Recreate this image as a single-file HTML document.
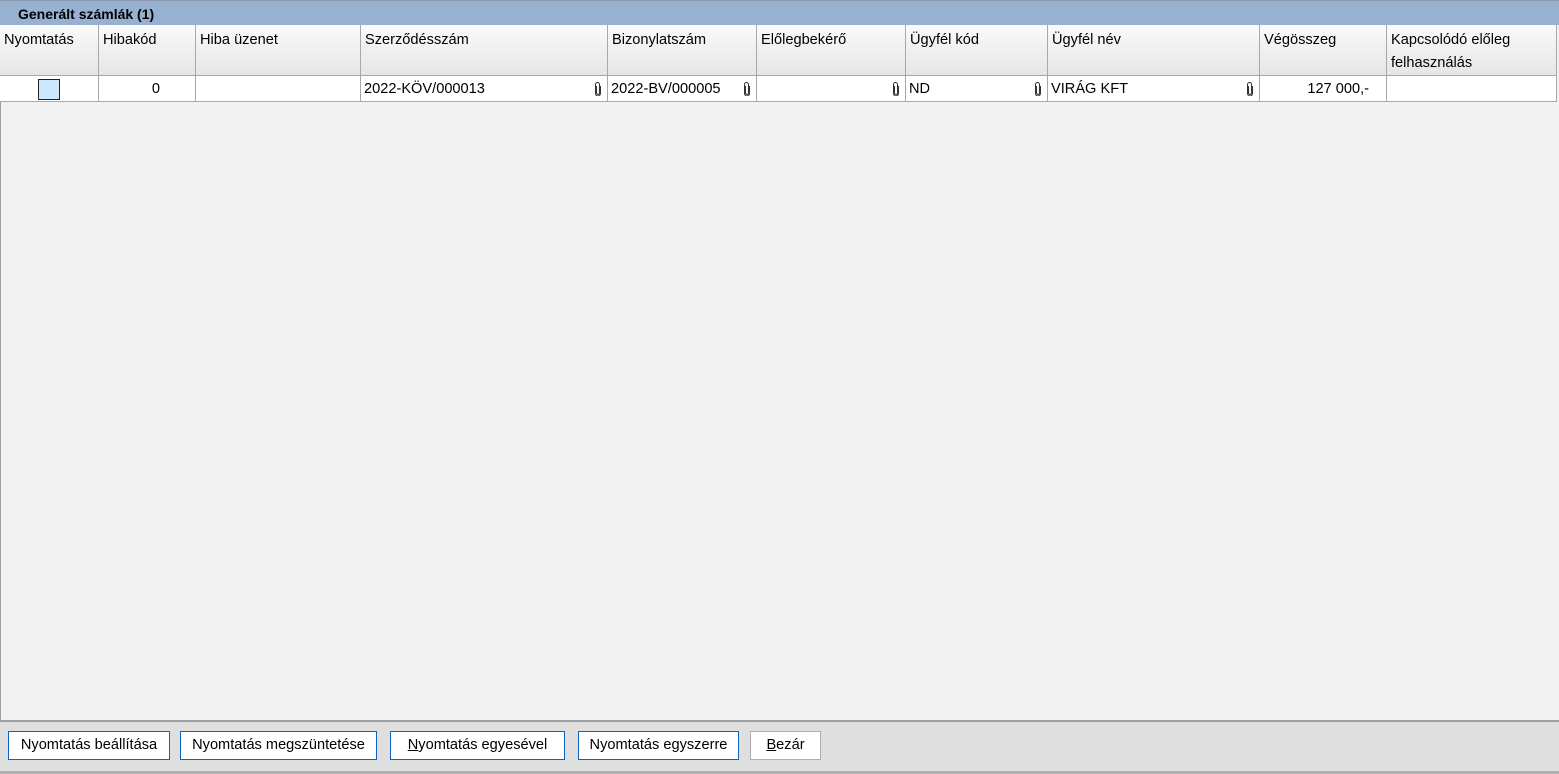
<!DOCTYPE html>
<html><head><meta charset="utf-8"><style>
*{margin:0;padding:0;box-sizing:border-box}
body{width:1559px;height:774px;background:#f2f2f2;font-family:"Liberation Sans",sans-serif;font-size:14.6px;color:#000;position:relative;overflow:hidden}
.abs{position:absolute}
.title{left:0;top:0;width:1559px;height:25px;background:#97b2d1;border-top:1px solid #8a9ab0;font-weight:bold;font-size:14px;padding:5px 0 0 18px}
.hd{top:25px;height:51px;background:linear-gradient(#fafafa,#e6e6e6);border-right:1px solid #a8a8a8;border-bottom:1px solid #a8a8a8;padding:4px 4px;line-height:23px}
.cell{top:76px;height:26px;background:#fff;border-right:1px solid #a8a8a8;border-bottom:1px solid #a8a8a8;padding:4px 3px;line-height:18px;white-space:nowrap}
.clip{position:absolute;right:5px;top:6px}
.btn{top:731px;height:29px;background:#fff;border:1px solid #0a64c0;text-align:center;line-height:27px;font-size:14.6px}
</style></head><body>
<div class="abs title">Generált számlák (1)</div>
<div class="abs" style="left:0;top:25px;width:1px;height:696px;background:#a0a0a0"></div>

<div class="abs hd" style="left:0;width:99px">Nyomtatás</div>
<div class="abs hd" style="left:99px;width:97px">Hibakód</div>
<div class="abs hd" style="left:196px;width:165px">Hiba üzenet</div>
<div class="abs hd" style="left:361px;width:247px">Szerződésszám</div>
<div class="abs hd" style="left:608px;width:149px">Bizonylatszám</div>
<div class="abs hd" style="left:757px;width:149px">Előlegbekérő</div>
<div class="abs hd" style="left:906px;width:142px">Ügyfél kód</div>
<div class="abs hd" style="left:1048px;width:212px">Ügyfél név</div>
<div class="abs hd" style="left:1260px;width:127px">Végösszeg</div>
<div class="abs hd" style="left:1387px;width:170px">Kapcsolódó előleg felhasználás</div>

<div class="abs cell" style="left:0;width:99px"><div style="position:absolute;left:38px;top:3px;width:22px;height:21px;background:#cce8ff;border:1px solid #222"></div></div>
<div class="abs cell" style="left:99px;width:97px;text-align:right;padding-right:35px">0</div>
<div class="abs cell" style="left:196px;width:165px"></div>
<div class="abs cell" style="left:361px;width:247px">2022-KÖV/000013<svg class="clip" width="8" height="14" viewBox="0 0 8 14"><path d="M2.5 4v7a1.5 1.5 0 0 0 3 0V2.5a2 2 0 0 0-4 0V11.5a2.5 2.5 0 0 0 5 0V4" fill="none" stroke="#333" stroke-width="1"/></svg></div>
<div class="abs cell" style="left:608px;width:149px">2022-BV/000005<svg class="clip" width="8" height="14" viewBox="0 0 8 14"><path d="M2.5 4v7a1.5 1.5 0 0 0 3 0V2.5a2 2 0 0 0-4 0V11.5a2.5 2.5 0 0 0 5 0V4" fill="none" stroke="#333" stroke-width="1"/></svg></div>
<div class="abs cell" style="left:757px;width:149px"><svg class="clip" width="8" height="14" viewBox="0 0 8 14"><path d="M2.5 4v7a1.5 1.5 0 0 0 3 0V2.5a2 2 0 0 0-4 0V11.5a2.5 2.5 0 0 0 5 0V4" fill="none" stroke="#333" stroke-width="1"/></svg></div>
<div class="abs cell" style="left:906px;width:142px">ND<svg class="clip" width="8" height="14" viewBox="0 0 8 14"><path d="M2.5 4v7a1.5 1.5 0 0 0 3 0V2.5a2 2 0 0 0-4 0V11.5a2.5 2.5 0 0 0 5 0V4" fill="none" stroke="#333" stroke-width="1"/></svg></div>
<div class="abs cell" style="left:1048px;width:212px">VIRÁG KFT<svg class="clip" width="8" height="14" viewBox="0 0 8 14"><path d="M2.5 4v7a1.5 1.5 0 0 0 3 0V2.5a2 2 0 0 0-4 0V11.5a2.5 2.5 0 0 0 5 0V4" fill="none" stroke="#333" stroke-width="1"/></svg></div>
<div class="abs cell" style="left:1260px;width:127px;text-align:right;padding-right:17px">127 000,-</div>
<div class="abs cell" style="left:1387px;width:170px"></div>

<div class="abs" style="left:0;top:720px;width:1559px;height:54px;background:#dfdfdf;border-top:2px solid #a0a0a0"></div>
<div class="abs btn" style="left:8px;width:162px">Nyomtatás beállítása</div>
<div class="abs btn" style="left:180px;width:197px">Nyomtatás megszüntetése</div>
<div class="abs btn" style="left:390px;width:175px"><u>N</u>yomtatás egyesével</div>
<div class="abs btn" style="left:578px;width:161px">Nyomtatás egyszerre</div>
<div class="abs btn" style="left:750px;width:71px;border-color:#adadad"><u>B</u>ezár</div>
<div class="abs" style="left:0;top:771px;width:1559px;height:3px;background:#b0b0b0"></div>
</body></html>
